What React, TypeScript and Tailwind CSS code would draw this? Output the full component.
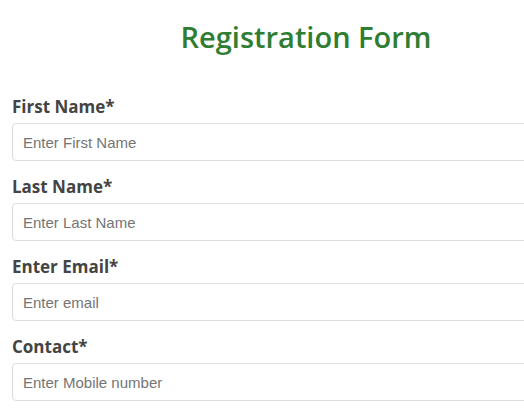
export default function App() {
  const fields = [
    { label: "First Name*", placeholder: "Enter First Name", type: "text" },
    { label: "Last Name*", placeholder: "Enter Last Name", type: "text" },
    { label: "Enter Email*", placeholder: "Enter email", type: "email" },
    { label: "Contact*", placeholder: "Enter Mobile number", type: "tel" },
  ];

  return (
    <div className="w-[524px] h-[419px] overflow-hidden bg-white">
      <form className="w-[612px] px-3 pt-[18px]">
        <h1 className="text-center text-[29px] leading-[38px] font-semibold text-[#2e7d32] font-['Open_Sans',sans-serif] mb-[39px]">
          Registration Form
        </h1>
        {fields.map((f) => (
          <div key={f.label} className="mb-[14px]">
            <label className="block text-[17px] leading-[24px] font-bold text-[#444] font-['Open_Sans',sans-serif] mb-[4px]">
              {f.label}
            </label>
            <input
              type={f.type}
              placeholder={f.placeholder}
              className="block w-full h-[38px] px-[10px] border border-[#ddd] rounded-[4px] text-[15px] font-['Liberation_Sans',Arial,sans-serif] placeholder:text-[#757575] outline-none"
            />
          </div>
        ))}
      </form>
    </div>
  );
}
